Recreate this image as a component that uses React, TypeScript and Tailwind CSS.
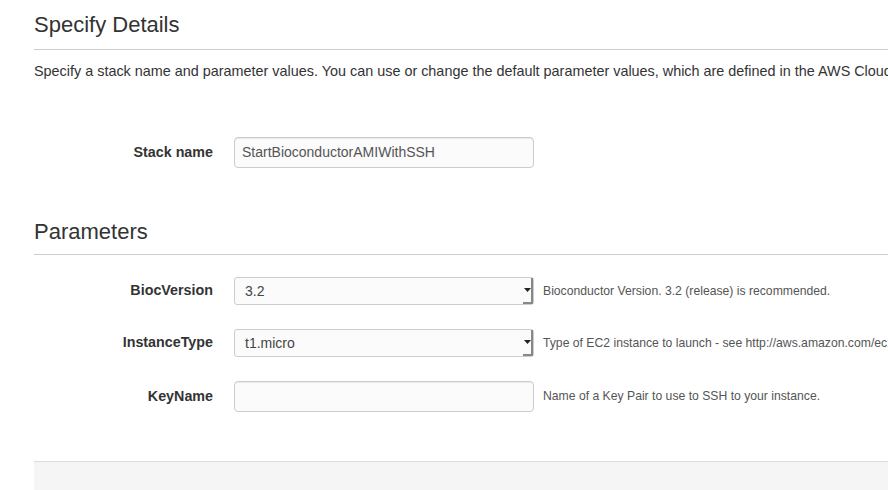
import type { ReactNode } from "react";

const PARAMS: { label: string; kind: "select" | "input"; value: string; help: string }[] = [
  { label: "BiocVersion", kind: "select", value: "3.2", help: "Bioconductor Version. 3.2 (release) is recommended." },
  {
    label: "InstanceType",
    kind: "select",
    value: "t1.micro",
    help: "Type of EC2 instance to launch - see http://aws.amazon.com/ec2/instance-types/ for details.",
  },
  { label: "KeyName", kind: "input", value: "", help: "Name of a Key Pair to use to SSH to your instance." },
];

function Row({ label, children, help, className }: { label: string; children: ReactNode; help?: string; className?: string }) {
  return (
    <div className={`flex items-center ${className ?? ""}`}>
      <label className="w-[179px] shrink-0 text-right text-[14.3px] font-bold text-[#333]">{label}</label>
      <div className="ml-[21px] w-[300px] shrink-0">{children}</div>
      {help && <p className="ml-[9px] whitespace-nowrap text-[12.2px] text-[#555]">{help}</p>}
    </div>
  );
}

function TextBox({ value }: { value: string }) {
  return (
    <div className="flex h-[31px] items-center rounded-[4px] border border-[#ccc] bg-[#fbfbfb] px-[7px] text-[14px] text-[#555] shadow-[inset_0_1px_1px_rgba(0,0,0,0.075)]">
      {value}
    </div>
  );
}

function SelectBox({ value }: { value: string }) {
  return (
    <div className="flex h-[28px] items-center rounded-[3px] border border-[#ccc] bg-[#fbfbfb] pl-[10px] text-[14px] text-[#444]">
      <span className="flex-1">{value}</span>
      <div className="flex h-full w-[10px] items-center justify-center border-r-2 border-b-2 border-[#888]">
        <svg width="7" height="4" viewBox="0 0 7 4">
          <path d="M0 0h7L3.5 4z" fill="#222" />
        </svg>
      </div>
    </div>
  );
}

export default function App() {
  return (
    <div className="h-[490px] w-[888px] overflow-hidden bg-white font-['Liberation_Sans',Arial,sans-serif] text-[#333]">
      <div className="pl-[34px]">
        <h1 className="pt-[12px] text-[22px] leading-[26px] text-[#333]">Specify Details</h1>
        <div className="mt-[11px] h-px bg-[#ccc]" />
        <p className="mt-[11px] whitespace-nowrap text-[14.4px] leading-[20px]">
          Specify a stack name and parameter values. You can use or change the default parameter values, which are defined in the AWS CloudFormation template.
        </p>

        <Row label="Stack name" className="mt-[56px]">
          <TextBox value="StartBioconductorAMIWithSSH" />
        </Row>

        <h2 className="mt-[51px] text-[22px] leading-[26px] text-[#333]">Parameters</h2>
        <div className="mt-[9px] h-px bg-[#ccc]" />

        <div className="mt-[22px] flex flex-col gap-[24px]">
          {PARAMS.map((p) => (
            <Row key={p.label} label={p.label} help={p.help}>
              {p.kind === "select" ? <SelectBox value={p.value} /> : <TextBox value={p.value} />}
            </Row>
          ))}
        </div>

        <div className="mt-[49px] h-[40px] border-t border-[#ddd] bg-[#f5f5f5]" />
      </div>
    </div>
  );
}
